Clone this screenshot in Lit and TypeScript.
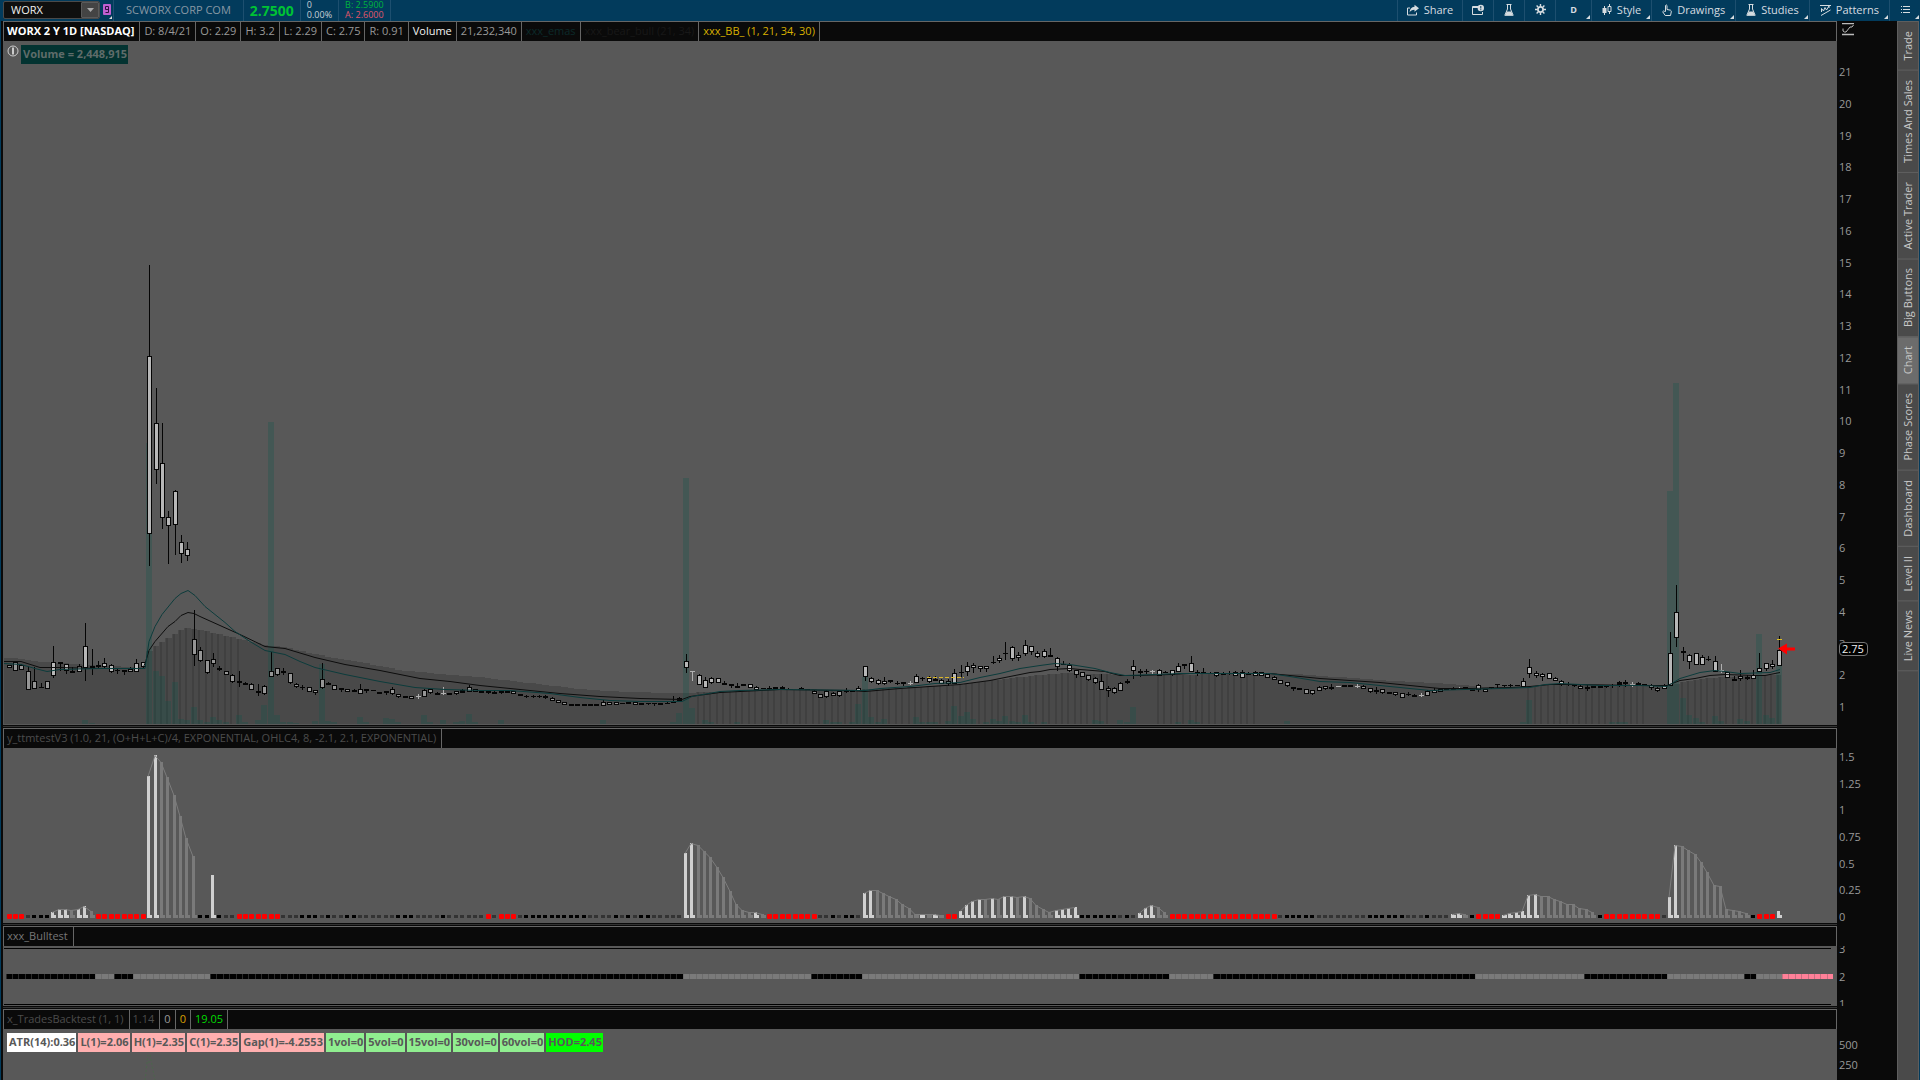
import { LitElement, html, css, svg, nothing } from "lit";
import { customElement, property } from "lit/decorators.js";

/* ------------------------------------------------------------------ */
/* Series data                                                         */
/* ------------------------------------------------------------------ */

const STEP = 6.39;
const barX = (i: number) => Math.floor(9.05 + i * STEP);
/** Heights in the tables below are measured from this line. */
const BASE = 560;

/**
 * One entry per trading day: high, body top, body bottom, low.
 * A trailing letter is the kind: b = dark bar, p = pale cross, none = hollow candle.
 */
const CANDLES = `
105,105,108,108 101,102,111,111 104,105,110,110 106,111,130,130 107,121,129,129 123,127,128,128b 121,121,129,129
86,102,116,118 102,102,104,111b 104,104,111,114 107,111,113,113b 104,106,112,112 63,86,108,121 89,106,108,115b
101,105,107,109b 98,103,107,109 104,105,112,113 109,110,111,114b 110,110,112,115b 107,109,112,112 99,103,112,112
102,102,107,109 -295,-204,-26,6 -172,-137,-90,-76 -137,-97,-42,-31 -49,-43,-34,4 -70,-69,-35,-5 -25,-18,-6,3
-18,-11,-4,1 50,79,95,106 87,90,101,102 100,100,113,114 93,99,104,107 106,108,110,111 111,111,115,115
114,115,122,123 111,121,123,127b 122,123,125,125b 123,124,130,130 124,131,133,136b 125,126,134,135 92,111,117,117
108,108,115,116 108,111,113,115b 113,113,123,124 123,124,127,128 125,127,128,130b 127,127,132,132 130,130,133,135
103,119,128,129 122,123,125,125b 125,125,130,130 128,128,130,132b 129,129,132,132 129,130,132,132b 124,129,134,134
129,129,131,133b 130,130,131,131b 132,132,134,134b 131,131,133,135b 127,129,134,135 134,134,137,138 136,136,138,138b
136,136,139,139 134,136,137,139p 129,130,137,137 129,129,133,134 132,133,135,135b 127,133,134,135p 133,133,135,135b
131,131,134,135 129,130,133,133b 125,127,132,132 129,129,132,132 131,131,133,133b 131,131,133,134b 131,132,134,134b
131,131,133,134b 131,131,133,133b 131,131,134,134 134,134,136,136b 135,136,137,138b 135,136,137,138b 135,136,137,138b
135,136,138,139b 137,138,141,141 140,140,143,143 142,142,145,145 144,144,146,146b 144,144,146,146b 144,144,146,146b
144,144,146,146b 144,144,146,146b 140,142,146,146 142,142,145,145 142,142,145,145 143,143,144,144b 142,142,144,144b
142,142,145,145 143,143,145,145b 143,143,144,145b 143,143,144,146b 143,143,145,145b 142,143,144,144b 136,142,143,143b
137,138,141,141b 94,101,108,113 111,111,112,121p 114,115,125,125 117,120,128,128 117,118,123,124 118,118,123,123
121,123,125,125b 124,124,126,128b 123,126,128,128b 124,124,126,126b 124,124,128,128 126,127,130,130 128,128,129,129b
126,128,129,130b 127,127,129,129b 126,127,129,129b 128,129,130,130b 129,129,130,130p 127,128,129,129b 129,129,130,130b
130,131,134,134 134,134,138,138 130,131,137,138 132,133,136,136 131,131,136,137 128,131,132,133b 131,131,132,132b
126,128,131,131 106,106,117,121 117,118,122,123 119,120,124,125 117,121,124,125 120,120,122,123b 121,123,124,125b
122,122,124,126b 121,123,124,125p 114,116,123,123 117,118,119,121b 116,118,122,123 116,119,121,121b 119,120,124,124
119,121,124,126 109,113,124,124 105,112,113,117b 102,106,112,116 103,105,108,113 106,106,109,112 106,106,109,112
96,102,103,104b 95,98,101,103 82,93,94,100b 86,87,99,101 92,95,98,101 80,85,94,96 86,86,92,95
91,93,97,98 89,91,97,98 88,95,97,97b 97,98,107,111 101,104,105,105b 103,105,111,112 110,110,115,118
112,112,117,117 115,115,120,121 117,118,123,124 114,121,130,130 126,128,131,137 127,128,133,134 122,123,131,131
119,121,123,124b 100,106,111,119 109,111,113,117b 109,111,112,114b 110,111,112,114p 109,110,116,116 111,112,113,113b
110,110,115,116 103,106,112,112 104,104,106,109b 96,103,112,112 110,112,113,116b 108,112,113,113b 112,113,114,114b
112,112,116,117 112,113,115,115b 111,113,114,115b 111,112,116,116 110,112,118,118 112,113,115,115b 111,112,116,116
112,112,116,116 114,114,118,118 116,117,120,120 120,120,124,124 122,122,126,127 127,127,129,131b 128,128,130,130b
129,129,134,134 130,130,134,135 126,127,131,131 126,126,129,130 124,127,129,130b 126,126,127,127p 125,125,127,127b
125,125,127,127b 124,126,127,128p 125,126,129,129 128,128,132,133 127,130,132,134b 129,129,133,134 132,132,134,134b
132,132,135,136 133,133,138,138 132,134,135,136b 134,135,137,137b 133,135,136,137p 130,131,136,136 128,130,133,133
129,129,132,132 128,128,130,130b 127,128,130,130b 127,128,129,129p 127,127,129,129b 129,129,131,131b 124,125,130,132
129,129,132,132 127,127,128,129b 124,124,125,128b 125,125,126,127b 124,125,126,127b 125,125,126,126b 118,121,127,127
99,107,114,118 111,113,116,118 113,114,117,121 113,113,119,119 117,118,121,121 120,121,125,126 122,124,125,126b
124,125,126,127b 125,126,129,129 125,127,129,131b 126,126,128,128b 126,126,128,128b 125,126,127,128b 124,125,126,128b
121,122,125,127b 120,122,124,127b 122,124,125,127p 122,123,125,126b 124,124,125,126b 124,125,128,130 127,128,131,132
124,125,129,129 72,93,126,126 25,52,78,87 87,91,93,101b 94,95,102,109 93,93,105,105 95,97,105,105
96,99,100,101b 96,101,112,112 104,110,111,113p 112,112,118,118 116,119,121,121b 110,116,119,121 115,117,119,120b
110,115,119,119 93,108,112,112 103,103,109,111 100,104,107,109 76,90,106,106`
  .trim()
  .split(/\s+/)
  .map((s) => {
    const kind = /[bp]$/.test(s) ? s.slice(-1) : "";
    const [hi, top, bot, lo] = s.replace(/[bp]$/, "").split(",").map(Number);
    return { hi, top, bot, lo, kind };
  });

type Pt = [number, number];
const pts = (s: string): Pt[] => s.trim().split(/\s+/).map((p) => p.split(",").map(Number) as Pt);

const SLOW = pts(`4,101 21,101 40,107 60,107 100,108 143,108 146,100 149,90 155,81 168,66 175,61 181,55 188,52 194,53
200,56 220,65 240,74 265,86 285,88 315,97 345,104 380,110 420,118 450,121 480,125 520,129 560,133 600,136 640,138 682,139
690,136 705,134 720,132 740,131 780,129 850,130 865,131 900,128 930,126 960,124 990,120 1010,116 1030,112 1040,111
1050,109 1070,108 1080,109 1105,111 1112,113 1120,115 1140,115 1170,114 1190,113 1270,113 1290,115 1320,118 1350,120
1380,122 1410,125 1440,128 1470,128 1510,127 1530,126 1550,124 1575,124 1640,125 1667,125 1680,120 1695,118 1710,115
1725,114 1755,115 1765,115 1780,112`);

const FAST = pts(`4,103 21,104 35,108 47,111 60,109 100,108 145,108 149,81 155,66 162,54 175,38 181,33 188,30 195,35 205,46
215,54 225,62 235,71 250,81 265,90 285,94 300,101 315,107 345,114 380,121 415,127 445,129 480,130 510,130 550,133 580,137
610,140 640,141 682,141 692,136 720,131 740,130 780,129 865,130 880,128 910,126 935,123 960,122 980,117 1000,113 1020,108
1040,105 1055,103 1070,104 1095,108 1110,112 1125,115 1155,114 1180,113 1270,113 1290,116 1320,121 1350,122 1380,125
1410,128 1430,130 1500,128 1530,127 1545,124 1560,123 1600,125 1640,125 1667,126 1680,118 1700,112 1715,110 1725,111
1740,113 1770,112 1780,109`);

const SHADE = pts(`4,97 20,99 40,102 60,103 100,106 143,107 149,91 155,87 165,80 181,70 187,68 200,70 220,74 240,79 265,85
285,87 315,94 340,99 365,103 400,110 440,114 480,117 530,123 580,129 625,132 683,133 730,131 780,129 850,130 960,125
1010,118 1050,114 1070,113 1105,114 1130,116 1270,113 1310,115 1380,120 1450,124 1460,125 1500,128 1528,127 1545,125
1640,125 1672,125 1685,121 1720,117 1780,115`);

const at = (line: Pt[], x: number) => {
  let k = 1;
  while (k < line.length - 1 && line[k][0] < x) k++;
  const [x0, y0] = line[k - 1];
  const [x1, y1] = line[k];
  return Math.round(y0 + ((y1 - y0) * (x - x0)) / (x1 - x0));
};

const SQUEEZE: Pt[] = [[22, 36], [108, 172], [180, 195], [238, 256], [262, 277]];
const inSqueeze = (i: number) => SQUEEZE.some(([a, b]) => i >= a && i <= b);

const VOLUME = pts(`12,160 13,163 22,-117 23,111 24,116 25,141 26,122 27,159 28,160 29,147 30,160 31,162 32,157 33,160
34,162 36,155 37,162 39,160 40,145 41,-138 42,155 43,162 44,162 45,163 48,161 49,104 50,161 51,162 55,157 56,162 59,158
60,159 61,162 65,155 66,162 68,160 70,162 71,161 72,154 73,162 77,160 93,160 104,162 105,153 106,-82 107,148 109,160
110,162 114,162 128,160 129,162 130,162 132,162 133,144 134,117 135,157 136,162 137,159 142,157 143,162 144,162 145,162
147,161 148,146 149,156 150,152 151,159 153,162 154,159 155,161 156,156 157,161 158,162 159,155 160,162 162,162 170,160
171,161 174,160 175,162 176,147 183,162 185,160 186,162 200,161 237,162 238,140 251,162 252,162 253,162 260,-69 261,-177
262,138 263,155 264,158 265,162 267,156 268,161 271,159 272,161 274,74 275,155 276,158 277,106`);

/** Momentum histogram, run-length: r/d/k = dot colour, w/g = bar with its top. */
const MOMENTUM: { kind: string; top: number }[] = [];
`r3 d1 k3 w352 w349 w349 g350 w349 w346 g351 r8 w216 w195 g202 g217 g235 g256 g278 g296 k2 w315 k1 d2 r7 d3 k3 d1 k1 d2
k2 d6 k3 d4 k1 d6 r1 d1 r3 d1 k10 d4 k1 d1 k1 d1 k2 d5 w293 w283 g285 g291 g297 g307 g317 g331 g344 g350 g352 w352 g354
r8 d2 k1 d1 k2 d1 w333 w330 g330 g333 g336 g339 g344 g348 g354 w354 g354 w354 g355 r2 w351 w345 w341 w339 g339 w338 g339
w336 w336 g337 w336 g338 g345 g349 g352 w350 w349 w348 w347 k6 d1 k1 d1 w353 w348 w345 g347 g352 r17 d1 k5 d8 k6 d3 k1 d3
w354 w353 g354 k1 r4 w355 w353 w352 w351 w335 w334 g336 g336 g339 g341 g344 g344 g348 g349 g352 k1 r9 d1 w337 w285 g286
g290 g294 g302 g312 g325 g326 g349 g350 g351 g353 k1 r3 w351`
  .split(/\s+/)
  .forEach((t) => {
    const kind = t[0];
    const n = Number(t.slice(1));
    if (kind === "w" || kind === "g") MOMENTUM.push({ kind, top: n });
    else for (let j = 0; j < n; j++) MOMENTUM.push({ kind, top: 0 });
  });

const TREND = "k14 g3 k3 g12 k74 g20 k8 g34 k14 g7 k41 g17 k13 g12 k2 g4 p8"
  .split(" ")
  .flatMap((t) => Array<string>(Number(t.slice(1))).fill(t[0]));

/* ------------------------------------------------------------------ */
/* Icons                                                               */
/* ------------------------------------------------------------------ */

const ICONS: Record<string, unknown> = {
  share: html`<svg width="12" height="12" viewBox="0 0 12 12"><path d="M3 4H.5v7h9V8.500" fill="none" stroke="currentColor"/><path d="M7.500.8 12 4.300 7.500 7.800V5.700C5 5.700 3.500 6.500 2.600 8.600 2.600 5 4.500 3 7.500 2.800z" fill="currentColor"/></svg>`,
  alert: html`<svg width="12" height="12" viewBox="0 0 12 12"><path d="M6 2.500H.5v8h10V8" fill="none" stroke="currentColor"/><path d="M1 3h5v1H1z" fill="currentColor"/><circle cx="8.800" cy="4" r="3.200" fill="currentColor"/><path d="M8.800 2v2.500M8.800 5.200v1" stroke="#023b5c"/></svg>`,
  flask: html`<svg width="10" height="12" viewBox="0 0 10 12"><path d="M2.500.5h5M3.500 1v4L.8 11.300h8.400L6.500 5V1" fill="none" stroke="currentColor"/><path d="M2.700 7.500h4.600l1.500 3.700H1.200z" fill="currentColor"/></svg>`,
  gear: html`<svg width="11" height="11" viewBox="0 0 11 11"><circle cx="5.500" cy="5.500" r="2.600" fill="none" stroke="currentColor" stroke-width="1.800"/><path d="M5.500 0v2M5.500 9v2M0 5.500h2M9 5.500h2M1.600 1.600 3 3M8 8l1.400 1.400M1.600 9.400 3 8M8 3l1.400-1.400" stroke="currentColor" stroke-width="1.400"/></svg>`,
  candles: html`<svg width="10" height="12" viewBox="0 0 10 12"><path d="M2.500 2v9M7.500 0v2M7.500 8v2" stroke="currentColor"/><path d="M.5 4h4v5h-4z" fill="currentColor"/><path d="M6 2.500h3v5H6z" fill="none" stroke="currentColor"/></svg>`,
  hand: html`<svg width="10" height="12" viewBox="0 0 10 12"><path d="M3.500 7.500v-6q.8-1.200 1.500 0v4l3.500.7q1 .5.800 1.600l-.8 3.700H3.200L.7 7.700q.6-1.200 1.600-.4z" fill="none" stroke="currentColor"/></svg>`,
  patterns: html`<svg width="11" height="12" viewBox="0 0 11 12"><path d="M0 1.500h11M1 11.500 10.500 6M1.500 8V4.500L3.500 7 5 3.500 6.500 6 9 2v2" fill="none" stroke="currentColor"/></svg>`,
  list: html`<svg width="9" height="8" viewBox="0 0 9 8" shape-rendering="crispEdges"><path d="M0 .5h1M2 .5h7M0 3.500h1M2 3.500h7M0 6.500h1M2 6.500h7" stroke="currentColor"/></svg>`,
};

@customElement("tool-button")
export class ToolButton extends LitElement {
  @property() icon = "";
  @property() label = "";
  @property() name = "";
  @property({ type: Boolean }) menu = false;

  static styles = css`
    :host { display: flex; border-left: 1px solid #1d4f6f; }
    button {
      position: relative;
      display: flex;
      align-items: center;
      gap: 5px;
      min-width: 30px;
      justify-content: center;
      padding: 0 9px 2px;
      border: 0;
      background: none;
      color: #d6dce0;
      font: 11px/19px "Open Sans", "Noto Sans", sans-serif;
      white-space: nowrap;
    }
    .wide { padding: 0 10px 2px; }
    .small { font-size: 9px; font-weight: 700; padding: 0 14px 2px; }
    svg { flex: none; }
    .corner {
      position: absolute;
      right: 1px;
      bottom: 2px;
      border: 2px solid;
      border-color: transparent currentColor currentColor transparent;
    }
  `;

  render() {
    const cls = this.icon ? (this.menu ? "wide" : "") : "small";
    return html`<button class=${cls} aria-label=${this.name || this.label}>
      ${this.icon ? ICONS[this.icon] : nothing}
      ${this.label ? html`<span>${this.label}</span>` : nothing}
      ${this.menu ? html`<span class="corner"></span>` : nothing}
    </button>`;
  }
}

/* ------------------------------------------------------------------ */
/* Plots                                                               */
/* ------------------------------------------------------------------ */

const rect = (x: number, y: number, w: number, h: number, fill: string) =>
  svg`<rect x=${x} y=${y} width=${w} height=${h} fill=${fill}></rect>`;

const polyline = (line: Pt[], color: string) =>
  svg`<polyline points=${line.map(([x, y]) => `${x},${y + BASE + 0.5}`).join(" ")}
    fill="none" stroke=${color} stroke-width="1" shape-rendering="auto"></polyline>`;

const candle = (c: (typeof CANDLES)[number], i: number) => {
  const x = barX(i);
  const top = c.top + BASE;
  const h = Math.max(1, c.bot - c.top);
  const ink = c.kind === "p" ? "#b0b0b0" : "#050505";
  const body = c.top > at(SLOW, x) ? "#969696" : "#b8b8b8";
  return svg`${rect(x, c.hi + BASE, 1, Math.max(1, c.lo - c.hi), ink)}
    ${rect(x - 2, top, 5, h, ink)}
    ${c.kind === "" && h > 2 ? rect(x - 1, top + 1, 3, h - 2, body) : nothing}`;
};

const pricePlot = () => html`<svg class="plot" viewBox="4 41 1833 684" preserveAspectRatio="none" shape-rendering="crispEdges" role="img" aria-label="Price and volume">
  ${CANDLES.map((_, i) => {
    const x = barX(i);
    const y = at(SHADE, x) + BASE;
    const left = i ? x - 3 : 4;
    const next = i < CANDLES.length - 1 ? barX(i + 1) - 3 : x + 2;
    return svg`${rect(left, y, next - left, 724 - y, "#494949")}
      ${inSqueeze(i) ? rect(x - 2, y, 2, 724 - y, "#404040") : nothing}`;
  })}
  ${VOLUME.map(([i, y]) => rect(barX(i) - 3, y + BASE, 6, 164 - y, "rgba(10,85,75,.27)"))}
  ${CANDLES.map(candle)}
  ${polyline(SLOW, "#0d0d0d")}
  ${polyline(FAST, "#0c3c3c")}
  <path d="M927 677.500H964" stroke="#d8b52c" stroke-dasharray="4 2"></path>
  <path d="M1777 639.500h5" stroke="#e0c020"></path>
  <path d="M1778 648.500l9-5v4h8v3h-8v4z" fill="#f00" shape-rendering="auto"></path>
</svg>`;

const momentumPlot = () => {
  const runs: Pt[][] = [];
  MOMENTUM.forEach((m, i) => {
    if (!m.top) return;
    if (i && MOMENTUM[i - 1].top) runs[runs.length - 1].push([barX(i) - 1, m.top]);
    else runs.push([[barX(i) - 1, m.top]]);
  });
  return html`<svg class="plot" viewBox="4 748 1833 175" preserveAspectRatio="none" shape-rendering="crispEdges" role="img" aria-label="Momentum histogram">
    ${MOMENTUM.map((m, i) => {
      const x = barX(i);
      if (m.kind === "r")
        return svg`<rect x=${x - 2} y="914" width="5" height="5" rx="1" fill="#f00" shape-rendering="auto"></rect>`;
      if (!m.top) return rect(x - 2, 915, 4, 3, m.kind === "k" ? "#000" : "#333");
      const fill = m.kind === "w" ? "#d0d0d0" : "#7a7a7a";
      return svg`${rect(x - 2, m.top + BASE, 3, 358 - m.top, fill)}${rect(x - 1, 915, 4, 3, fill)}`;
    })}
    ${runs.map((r) => polyline(r, "#7c7c7c"))}
  </svg>`;
};

const TREND_FILL: Record<string, string> = { k: "#000", g: "#7a7a7a", p: "#ff8098" };
const TREND_EDGE: Record<string, string> = { k: "#2a2a2a", g: "#6c6c6c", p: "#c87080" };

const trendPlot = () => html`<svg class="plot" viewBox="4 946 1833 60" preserveAspectRatio="none" shape-rendering="crispEdges" role="img" aria-label="Bull test">
  <path d="M4 948.500H1831M4 1004.500H1831" stroke="#000"></path>
  ${TREND.map((k, i) => {
    const x = barX(i) - 3;
    const w = barX(i + 1) - 3 - x;
    return svg`${rect(x, 974, w, 5, TREND_FILL[k])}${rect(x, 974, 1, 5, TREND_EDGE[k])}`;
  })}
</svg>`;

const tradesPlot = () => html`<svg class="plot" viewBox="4 1029 1833 51" preserveAspectRatio="none" role="img" aria-label="Trades backtest">
  <path d="M145 1080l3-25M150 1055l5 25M148 1062l2 0" fill="none" stroke="#4c664c" stroke-dasharray="2 2"></path>
</svg>`;

/* ------------------------------------------------------------------ */
/* Page                                                                */
/* ------------------------------------------------------------------ */

type Cell = [text: string, tone?: string];

interface Panel {
  id: string;
  cells: Cell[];
  plot: () => unknown;
  axis: string[];
  chips?: Cell[];
}

const PANELS: Panel[] = [
  {
    id: "price",
    cells: [
      ["WORX 2 Y 1D [NASDAQ]", "title"], ["D: 8/4/21"], ["O: 2.29"], ["H: 3.2"], ["L: 2.29"], ["C: 2.75"], ["R: 0.91"],
      ["Volume", "white"], ["21,232,340"], ["xxx_emas", "teal"], ["xxx_bear_bull (21, 34)", "faint"],
      ["xxx_BB_ (1, 21, 34, 30)", "gold"],
    ],
    plot: pricePlot,
    axis: Array.from({ length: 21 }, (_, i) => String(21 - i)),
    chips: [["Volume = 2,448,915", "vol"]],
  },
  {
    id: "momentum",
    cells: [["y_ttmtestV3 (1.0, 21, (O+H+L+C)/4, EXPONENTIAL, OHLC4, 8, -2.1, 2.1, EXPONENTIAL)", "dim"]],
    plot: momentumPlot,
    axis: ["1.5", "1.25", "1", "0.75", "0.5", "0.25", "0"],
  },
  { id: "trend", cells: [["xxx_Bulltest", "mid"]], plot: trendPlot, axis: ["3", "2", "1"] },
  {
    id: "trades",
    cells: [["x_TradesBacktest (1, 1)", "dim"], ["1.14", "dim"], ["0"], ["0", "amber"], ["19.05", "green"]],
    plot: tradesPlot,
    axis: ["500", "250"],
    chips: [
      ["ATR(14):0.36", "plain"], ["L(1)=2.06", "pink"], ["H(1)=2.35", "pink"], ["C(1)=2.35", "pink"],
      ["Gap(1)=-4.2553", "pink"], ["1vol=0", "mint"], ["5vol=0", "mint"], ["15vol=0", "mint"], ["30vol=0", "mint"],
      ["60vol=0", "mint"], ["HOD=2.45", "lime"],
    ],
  },
];

const TABS = ["Trade", "Times And Sales", "Active Trader", "Big Buttons", "Chart", "Phase Scores", "Dashboard", "Level II", "Live News"];

@customElement("app-root")
export class AppRoot extends LitElement {
  static styles = css`
    :host {
      display: flex;
      flex-direction: column;
      height: 100vh;
      overflow: hidden;
      background: #0a0a0a;
      color: #999;
      font: 11px/18px "Open Sans", "Noto Sans", sans-serif;
    }
    * { box-sizing: border-box; }

    .bar { display: flex; flex: none; height: 21px; background: #023b5c; }
    .symbol {
      display: flex;
      width: 97px;
      height: 18px;
      margin: 1px 3px 0 3px;
      border: 1px solid #4a4a4a;
      border-radius: 2px;
      background: #0f0f0f;
    }
    .symbol input {
      flex: 1;
      min-width: 0;
      padding: 0 0 0 7px;
      border: 0;
      outline: 0;
      background: none;
      color: #f0f0f0;
      font: 11px/16px "Open Sans", "Noto Sans", sans-serif;
    }
    .symbol button {
      display: grid;
      place-items: center;
      width: 18px;
      padding: 0;
      border: 1px solid #5a5a5a;
      border-radius: 1px;
      background: #444;
      color: #aaa;
    }
    .link { display: flex; align-items: flex-start; width: 10px; padding: 4px 0 0; border: 0; background: none; }
    .quote { display: flex; }
    .quote > div { display: flex; border-left: 1px solid #1d4f6f; }
    .quote > .company { padding: 0 12px; color: #8898a4; line-height: 19px; }
    .quote > .last { padding: 0 6px; color: #00c234; font-size: 14px; line-height: 21px; font-weight: 700; }
    .quote > .pair { flex-direction: column; padding: 0 6px; font-size: 9px; line-height: 10px; color: #c8d0d6; }
    .quote > .end { width: 1px; }
    .bid { color: #00b43c; }
    .ask { color: #e0566a; }
    .tools { display: flex; margin-left: auto; }

    .main { display: flex; flex: 1; min-height: 0; border: solid #023b5c; border-width: 0 1px; }
    .panels {
      display: grid;
      flex: 1;
      min-width: 0;
      padding-left: 2px;
      grid-template-rows: 704fr 3px 195fr 3px 80fr 3px 71fr;
    }
    .split { margin-right: 60px; border: solid #0a0a0a; border-width: 1px 0; background: #333; }
    .panel {
      display: grid;
      min-height: 0;
      overflow: hidden;
      grid-template-columns: minmax(0, 1fr) 60px;
      grid-template-rows: 20px minmax(0, 1fr);
    }
    .head {
      display: flex;
      margin: 0;
      border: solid #666;
      border-width: 1px 1px 0;
      background: #0a0a0a;
      white-space: nowrap;
    }
    .head span { padding: 0 4px; border-right: 1px solid #666; }
    .head .title { padding: 0 5px 0 3px; color: #fff; font-weight: 700; }
    .head .white { color: #f2f2f2; }
    .head .teal { color: #0c2b2b; }
    .head .faint { color: #181818; }
    .head .gold { color: #d8b000; }
    .head .dim { color: #4c4c4c; }
    .head .mid { color: #777; }
    .head .amber { color: #d8a000; }
    .head .green { color: #00dc00; }
    .head .dim, .head .mid { padding: 0 5px 0 3px; }
    .canvas {
      position: relative;
      grid-row: 2;
      min-height: 0;
      border-left: 1px solid #585858;
      background: #585858;
    }
    .plot { display: block; width: 100%; height: 100%; }
    .chips {
      position: absolute;
      left: 3px;
      top: 4px;
      display: flex;
      gap: 2px;
      color: #585858;
      font-weight: 700;
    }
    .chips span { padding: 0 1px 1px 2px; }
    .vol { background: #033331; color: #5f6c6a; }
    .plain { background: #fff; }
    .pink { background: #ffafaf; }
    .mint { background: #90ee90; }
    .lime { background: #0f0; }

    .axis { position: relative; grid-row: 2; min-height: 0; overflow: hidden; }
    .axis ol {
      display: flex;
      flex-direction: column;
      justify-content: space-between;
      height: 100%;
      margin: 0;
      padding: 0 0 0 2px;
      list-style: none;
      line-height: 12px;
    }
    .price ol { padding-top: 25px; padding-bottom: 12px; }
    .momentum ol { padding-top: 3px; }
    .trend ol { height: auto; position: absolute; inset: -3px 0 -4px 0; }
    .trades ol { padding-top: 10px; padding-bottom: 9px; }
    .last-price {
      position: absolute;
      left: 2px;
      bottom: 69px;
      height: 14px;
      padding: 0 3px 0 2px;
      border: 1px solid #777;
      border-radius: 4px;
      background: #000;
      color: #eee;
      line-height: 12px;
    }
    .scale { display: flex; align-items: flex-start; padding: 2px 0 0 5px; border: 0; background: none; color: #bbb; }

    .tabs { display: flex; flex-direction: column; flex: none; width: 22px; border: solid #5e5e5e; border-width: 1px 1px 0; background: #4a4a4a; }
    .tabs button {
      display: block;
      padding: 9px 0;
      border: 0;
      border-top: 1px solid #606060;
      background: none;
      color: #c8c8c8;
      font: 11px/20px "Open Sans", "Noto Sans", sans-serif;
      writing-mode: vertical-rl;
      transform: rotate(180deg);
      white-space: nowrap;
    }
    .tabs .on { background: #6c6c6c; }
  `;

  private panel(p: Panel) {
    return html`<section class="panel ${p.id}">
      <div class="head">${p.cells.map(([t, tone]) => html`<span class=${tone ?? ""}>${t}</span>`)}</div>
      ${p.id === "price"
        ? html`<button class="scale" aria-label="Scale settings">
            <svg width="12" height="13" viewBox="0 0 12 13"><path d="M0 .5h12M0 11.500h12" stroke="currentColor" stroke-width="1.600"/><path d="M1 5.500v2.500l1.500 1H4l4-5h2l1.500-2" fill="none" stroke="currentColor"/></svg>
          </button>`
        : nothing}
      <div class="canvas">
        ${p.plot()}
        ${p.chips
          ? html`<div class="chips">
              ${p.id === "price"
                ? html`<svg width="12" height="12" viewBox="0 0 12 12" role="img" aria-label="Info"><circle cx="6" cy="6" r="5" fill="none" stroke="#ccc"/><path d="M6 2.500v7" stroke="#ccc" stroke-width="2"/></svg>`
                : nothing}
              ${p.chips.map(([t, tone]) => html`<span class=${tone}>${t}</span>`)}
            </div>`
          : nothing}
      </div>
      <div class="axis">
        <ol>${p.axis.map((v) => html`<li>${v}</li>`)}</ol>
        ${p.id === "price" ? html`<div class="last-price">2.75</div>` : nothing}
      </div>
    </section>`;
  }

  render() {
    return html`
      <header class="bar">
        <div class="symbol">
          <input aria-label="Symbol" .value=${"WORX"} />
          <button aria-label="Symbol list"><svg width="7" height="4" viewBox="0 0 7 4"><path d="M0 0h7L3.500 4z" fill="currentColor"/></svg></button>
        </div>
        <button class="link" aria-label="Link group 9">
          <svg width="10" height="16" viewBox="0 0 10 16"><rect width="8" height="11" rx="1" fill="#c060d0"/><path d="M5.500 4.500v-2h-3v3h3v-1.500M5.500 5v3.500h-3" fill="none" stroke="#301040"/><path d="M9 12v3H6z" fill="#ddd"/></svg>
        </button>
        <div class="quote">
          <div class="company">SCWORX CORP COM</div>
          <div class="last">2.7500</div>
          <div class="pair"><span>0</span><span>0.00%</span></div>
          <div class="pair"><span class="bid">B: 2.5900</span><span class="ask">A: 2.6000</span></div>
          <div class="end"></div>
        </div>
        <nav class="tools">
          <tool-button icon="share" label="Share"></tool-button>
          <tool-button icon="alert" name="Alerts"></tool-button>
          <tool-button icon="flask" name="Edit studies"></tool-button>
          <tool-button icon="gear" name="Settings"></tool-button>
          <tool-button label="D" menu></tool-button>
          <tool-button icon="candles" label="Style" menu></tool-button>
          <tool-button icon="hand" label="Drawings" menu></tool-button>
          <tool-button icon="flask" label="Studies" menu></tool-button>
          <tool-button icon="patterns" label="Patterns" menu></tool-button>
          <tool-button icon="list" name="More" menu></tool-button>
        </nav>
      </header>
      <div class="main">
        <main class="panels">
          ${PANELS.map((p, i) => html`${i ? html`<div class="split"></div>` : nothing}${this.panel(p)}`)}
        </main>
        <nav class="tabs">
          ${TABS.map((t) => html`<button class=${t === "Chart" ? "on" : ""}>${t}</button>`)}
        </nav>
      </div>
    `;
  }
}
